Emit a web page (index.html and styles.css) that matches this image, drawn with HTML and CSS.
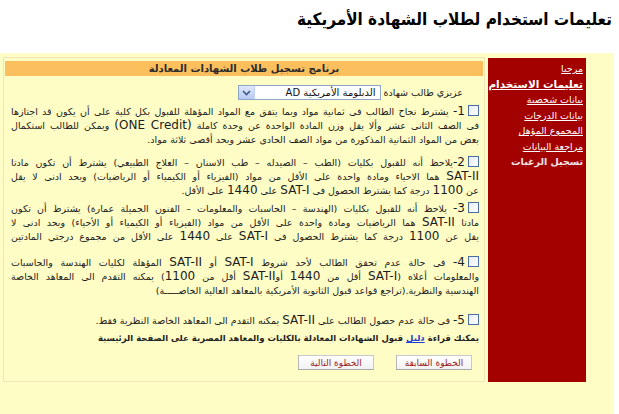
FILE: index.html
```html
<!DOCTYPE html>
<html lang="ar" dir="rtl">
<head>
<meta charset="utf-8">
<title>تعليمات استخدام لطلاب الشهادة الأمريكية</title>
<link rel="stylesheet" href="styles.css">
</head>
<body>
<h1 class="title">تعليمات استخدام لطلاب الشهادة الأمريكية</h1>
<div class="stage">
  <div class="frame">
    <nav class="side">
      <a class="side-link" href="#">مرحبا</a>
      <a class="side-link current" href="#">تعليمات الاستخدام</a>
      <a class="side-link" href="#">بيانات شخصية</a>
      <a class="side-link" href="#">بيانات الدرجات</a>
      <a class="side-link" href="#">المجموع المؤهل</a>
      <a class="side-link" href="#">مراجعة البيانات</a>
      <span class="side-link off">تسجيل الرغبات</span>
    </nav>
    <main class="panel">
      <div class="bar">برنامج تسجيل طلاب الشهادات المعادلة</div>
      <div class="pick">
        <span class="pick-label">عزيزي طالب شهادة</span>
        <div class="select">
          <span class="select-value">الدبلومة الأمريكية AD</span>
          <span class="select-arrow"><svg width="9" height="6" viewBox="0 0 9 6"><path d="M1 1 L4.5 4.5 L8 1" fill="none" stroke="#3a5688" stroke-width="1.6"/></svg></span>
        </div>
      </div>

      <p class="item i1">
        <span class="ln"><span class="cb"></span><span class="lat">1-</span> يشترط نجاح الطالب فى ثمانية مواد وبما يتفق مع المواد المؤهلة للقبول بكل كلية على أن يكون قد اجتازها</span>
        <span class="ln">فى الصف الثانى عشر وألا يقل وزن المادة الواحدة عن وحدة كاملة <span class="lat">(ONE Credit)</span> ويمكن للطالب استكمال</span>
        <span class="ln end">بعض من المواد الثمانية المذكورة من مواد الصف الحادى عشر وبحد أقصى ثلاثة مواد.</span>
      </p>

      <p class="item i2">
        <span class="ln"><span class="cb"></span><span class="lat">2-</span>يلاحظ أنه للقبول بكليات (الطب – الصيدله – طب الاسنان – العلاج الطبيعي) يشترط أن تكون مادتا</span>
        <span class="ln"><span class="lat">SAT-II</span> هما الاحياء ومادة واحدة على الأقل من مواد (الفيزياء أو الكيمياء أو الرياضيات) وبحد ادنى لا يقل</span>
        <span class="ln end">عن <span class="lat">1100</span> درجة كما يشترط الحصول فى <span class="lat">SAT-I</span> على <span class="lat">1440</span> على الأقل.</span>
      </p>

      <p class="item i3">
        <span class="ln"><span class="cb"></span><span class="lat">3-</span> يلاحظ أنه للقبول بكليات (الهندسة – الحاسبات والمعلومات – الفنون الجميلة عمارة) يشترط أن تكون</span>
        <span class="ln">مادتا <span class="lat">SAT-II</span> هما الرياضيات ومادة واحدة على الأقل من مواد (الفيزياء أو الكيمياء أو الأحياء) وبحد ادنى لا</span>
        <span class="ln">يقل عن <span class="lat">1100</span> درجة كما يشترط الحصول فى <span class="lat">SAT-I</span> على <span class="lat">1440</span> على الأقل من مجموع درجتي المادتين</span>
      </p>

      <p class="item i4">
        <span class="ln"><span class="cb"></span><span class="lat">4-</span> فى حالة عدم تحقق الطالب لأحد شروط <span class="lat">SAT-I</span> أو <span class="lat">SAT-II</span> المؤهلة لكليات الهندسة والحاسبات</span>
        <span class="ln">والمعلومات أعلاه (<span class="lat">SAT-I</span> أقل من <span class="lat">1440</span> أو<span class="lat">SAT-II</span> أقل من <span class="lat">1100</span>) يمكنه التقدم الى المعاهد الخاصة</span>
        <span class="ln end">الهندسية والنظرية.(تراجع قواعد قبول الثانوية الأمريكية بالمعاهد العالية الخاصـــــة)</span>
      </p>

      <p class="item i5">
        <span class="ln end"><span class="cb"></span><span class="lat">5-</span> فى حالة عدم حصول الطالب على <span class="lat">SAT-II</span> يمكنه التقدم الى المعاهد الخاصة النظرية فقط.</span>
      </p>

      <p class="note">يمكنك قراءة <a class="note-link" href="#">دليل</a> قبول الشهادات المعادلة بالكليات والمعاهد المصرية على الصفحة الرئيسية</p>

      <div class="btns">
        <button class="btn" type="button">الخطوة السابقة</button>
        <button class="btn" type="button">الخطوة التالية</button>
      </div>
    </main>
  </div>
</div>
</body>
</html>
```
FILE: styles.css
```css
html, body {
  margin: 0;
  padding: 0;
  background: #ffffff;
}
body {
  font-family: "DejaVu Sans", "Noto Sans", sans-serif;
  color: #1c1c1c;
  width: 619px;
  height: 414px;
  overflow: hidden;
}
.title {
  margin: 0;
  height: 53px;
  box-sizing: border-box;
  padding: 6px 7px 0 0;
  font-family: "DejaVu Sans Condensed", "DejaVu Sans", sans-serif;
  font-stretch: condensed;
  font-size: 17px;
  line-height: 26px;
  font-weight: bold;
  color: #000;
  text-align: right;
}
.stage {
  width: 614px;
  margin-right: 5px;
  height: 361px;
  box-sizing: border-box;
  background: #fffdc6;
  padding: 4px 28px 0 3px;
}
.frame {
  display: flex;
  flex-direction: row;
  align-items: stretch;
  gap: 3px;
}
.side {
  width: 98px;
  flex: none;
  background: #a30000;
  margin-top: 1px;
  box-sizing: border-box;
  padding: 3px 3px 0 0;
  display: flex;
  flex-direction: column;
  align-items: flex-start;
}
.side-link {
  color: #ffffff;
  font-size: 9.5px;
  line-height: 15.5px;
  text-decoration: underline;
  white-space: nowrap;
}
.side-link.current {
  font-weight: bold;
  font-size: 10.5px;
}
.side-link.off {
  text-decoration: none;
  color: #f1e6e6;
  font-weight: bold;
}
.panel {
  width: 482px;
  flex: none;
  box-sizing: border-box;
  border: 1px solid #efe5b6;
  padding: 3px 1px 11px 1px;
}
.bar {
  height: 15px;
  background: #fbbf5e;
  text-align: center;
  font-size: 10px;
  font-weight: bold;
  line-height: 15px;
  color: #2a2a2a;
}
.pick {
  margin-top: 9px;
  display: flex;
  align-items: center;
  gap: 3px;
  padding-right: 20px;
  height: 15px;
}
.pick-label {
  font-size: 9.5px;
  color: #222;
}
.select {
  width: 143px;
  height: 15px;
  box-sizing: border-box;
  border: 1px solid #8ea4c8;
  background: #ffffff;
  display: flex;
  align-items: center;
  justify-content: space-between;
}
.select-value {
  font-size: 10px;
  padding-right: 4px;
  color: #111;
  white-space: nowrap;
}
.select-arrow {
  width: 15px;
  height: 13px;
  background: linear-gradient(#dfe8fb, #b9cbf3);
  border-right: 1px solid #c3d2f0;
  display: flex;
  align-items: center;
  justify-content: center;
}
.item {
  margin: 0;
  padding: 0 4px 0 6px;
  font-size: 9.5px;
}
.ln {
  display: block;
  line-height: 14px;
  height: 14px;
  white-space: nowrap;
  text-align: justify;
  text-align-last: justify;
}
.ln.end {
  text-align-last: right;
}
.lat {
  font-size: 12px;
  line-height: 1;
}
.cb {
  display: inline-block;
  width: 9px;
  height: 9px;
  border: 1px solid #4b6ea6;
  background: linear-gradient(135deg, #e6ebf3, #ffffff);
  vertical-align: -1px;
  margin-left: 3px;
}
.i1 { margin-top: 5px; }
.i2 { margin-top: 9px; }
.i3 { margin-top: 4px; }
.i4 { margin-top: 12px; }
.i5 { margin-top: 16px; }
.note {
  margin: 3px 0 0 0;
  padding-right: 4px;
  font-size: 8.5px;
  font-weight: bold;
  line-height: 14px;
  color: #222;
}
.note-link {
  color: #1f3fd0;
  text-decoration: underline;
}
.btns {
  margin-top: 10px;
  display: flex;
  gap: 22px;
  padding-right: 11px;
}
.btn {
  width: 76px;
  height: 15px;
  padding: 0;
  font-family: "DejaVu Sans", sans-serif;
  font-size: 9px;
  color: #9a1c1c;
  background: linear-gradient(#ffffff, #f2f2f2);
  border: 1px solid #c9c9c9;
  border-bottom-color: #a9a9a9;
  border-left-color: #b5b5b5;
}
```
